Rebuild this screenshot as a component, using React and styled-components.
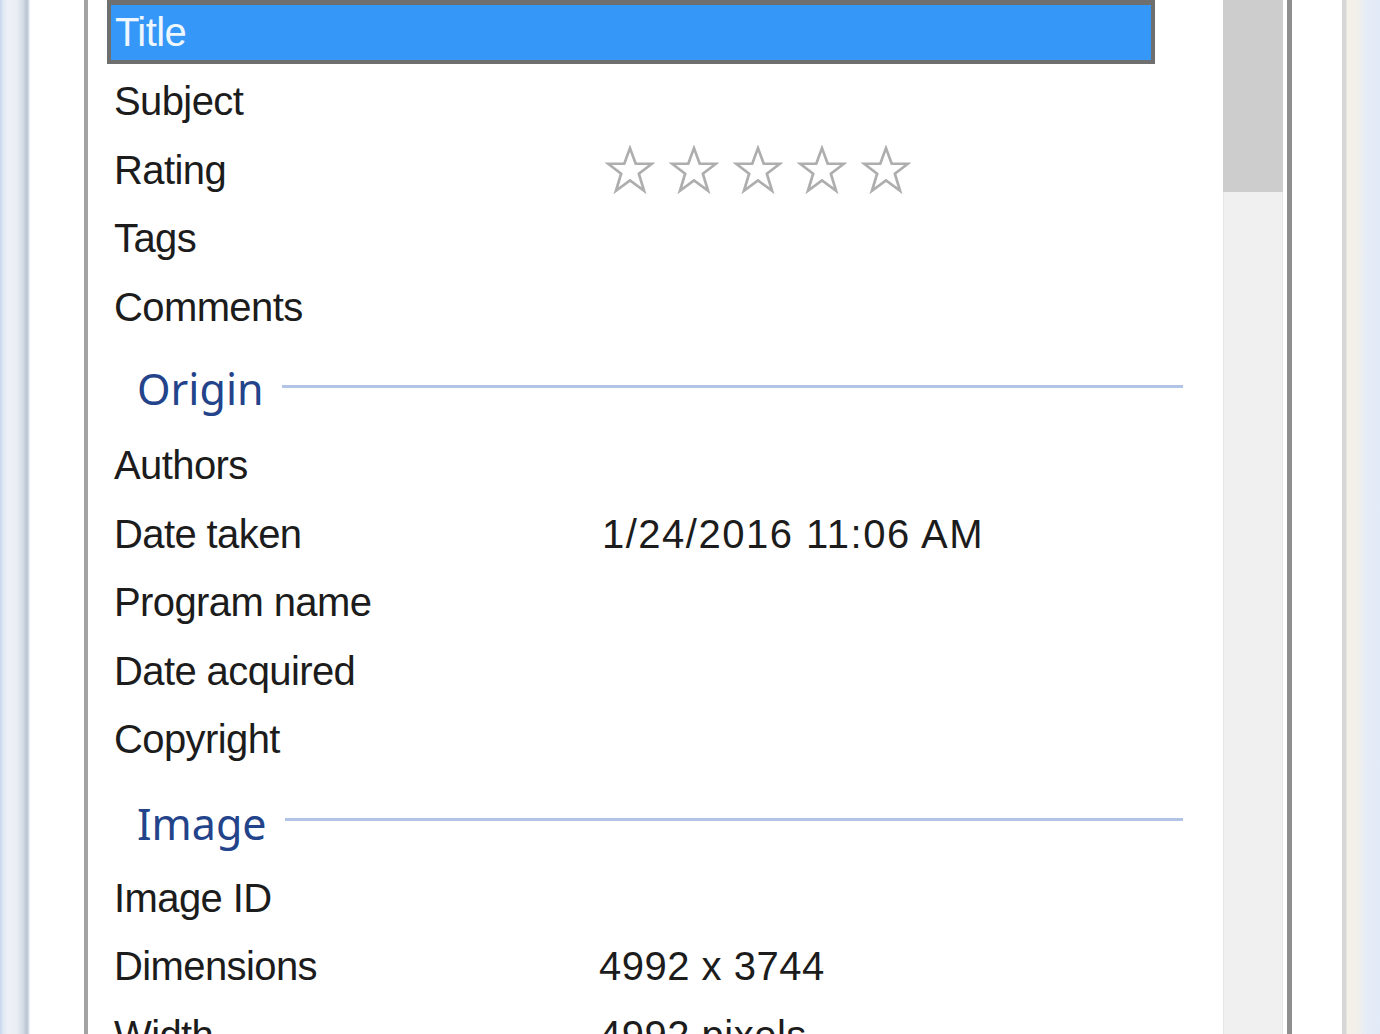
import React from "react";
import styled, { createGlobalStyle } from "styled-components";

const GlobalStyle = createGlobalStyle`
  html, body {
    margin: 0;
    padding: 0;
    background: #ffffff;
    overflow: hidden;
  }
  body {
    font-family: "Liberation Sans", Arial, sans-serif;
  }
`;

const Screen = styled.div`
  display: flex;
  width: 1380px;
  height: 1034px;
  overflow: hidden;
  background: #ffffff;
`;

const LeftFrame = styled.div`
  width: 30px;
  flex-shrink: 0;
  background: linear-gradient(
    to right,
    #c3d5ec 0px,
    #dfe8f3 3px,
    #eef2f7 8px,
    #e8edf3 17px,
    #d3dbe5 23px,
    #b8c3d1 27px,
    #f4f6f9 30px
  );
`;

const RightFrame = styled.div`
  width: 38px;
  flex-shrink: 0;
  background: linear-gradient(
    to right,
    #d6d6d6 0px,
    #d6d6d6 4px,
    #f4f1ea 5px,
    #f1efe9 16px,
    #e6edf7 24px,
    #e1eaf6 38px
  );
`;

const Gap = styled.div`
  width: ${(p) => p.w}px;
  flex-shrink: 0;
  background: #ffffff;
`;

const Panel = styled.div`
  width: 1208px;
  flex-shrink: 0;
  display: flex;
  box-sizing: border-box;
  border-left: 4px solid #a3a3a3;
  border-right: 5px solid #8f8f8f;
  background: #ffffff;
`;

const List = styled.div`
  flex: 1;
  padding-left: 19px;
  margin-top: -1px;
  display: flex;
  flex-direction: column;
`;

const Scrollbar = styled.div`
  width: 60px;
  margin-right: 4px;
  flex-shrink: 0;
  background: #f0f0f0;
  box-shadow: inset 1px 0 0 #e6e6e6, inset -1px 0 0 #e6e6e6;
`;

const Thumb = styled.div`
  height: 192px;
  background: #cdcdcd;
`;

const Row = styled.div`
  display: grid;
  grid-template-columns: 488px 1fr;
  align-items: center;
  flex-shrink: 0;
  width: 1048px;
  height: 68.5px;
  box-sizing: border-box;
  padding-left: 7px;
  font-size: 40px;
  color: #1c1c1c;
  white-space: nowrap;
`;

const SelectedRow = styled(Row)`
  height: 64.5px;
  margin-bottom: 4px;
  padding-left: 4px;
  color: #eef7ff;
  background: #3597f8;
  border: 4px solid #6f6f6f;
  border-top-width: 6px;
`;

const Label = styled.span`
  letter-spacing: -0.6px;
`;

const Value = styled.span`
  letter-spacing: ${(p) => p.spacing ?? 0.5}px;
  margin-left: ${(p) => p.shift ?? 0}px;
`;

const SectionHeader = styled.div`
  display: flex;
  align-items: center;
  flex-shrink: 0;
  gap: 18px;
  width: 1076px;
  height: 90px;
  padding-left: 30px;
  box-sizing: border-box;
`;

const SectionTitle = styled.span`
  font-family: "Noto Sans", "Open Sans", sans-serif;
  font-size: 43px;
  color: #23438a;
  transform: translateY(${(p) => p.shift || 0}px);
`;

const SectionLine = styled.div`
  flex: 1;
  height: 3px;
  background: #b2c4e6;
`;

const Stars = styled.div`
  display: flex;
  gap: 14px;
  margin-left: 3px;
`;

const Star = () => (
  <svg width="50" height="50" viewBox="0 0 48 48">
    <polygon
      points="24,3 29.5,18 45,18 32.5,27.5 37.5,44 24,34 10.5,44 15.5,27.5 3,18 18.5,18"
      fill="#ffffff"
      stroke="#aeaeae"
      strokeWidth="2.6"
      strokeLinejoin="miter"
    />
  </svg>
);

const description = [
  { label: "Title", selected: true },
  { label: "Subject" },
  { label: "Rating", stars: true },
  { label: "Tags" },
  { label: "Comments" },
];

const origin = [
  { label: "Authors" },
  { label: "Date taken", value: "1/24/2016 11:06 AM", spacing: 1.5 },
  { label: "Program name" },
  { label: "Date acquired" },
  { label: "Copyright" },
];

const image = [
  { label: "Image ID" },
  { label: "Dimensions", value: "4992 x 3744", spacing: 0.5, shift: -3 },
  { label: "Width", value: "4992 pixels", shift: -3 },
];

const PropRow = ({ item }) => {
  const RowKind = item.selected ? SelectedRow : Row;
  return (
    <RowKind>
      <Label>{item.label}</Label>
      {item.stars ? (
        <Stars>
          {[0, 1, 2, 3, 4].map((i) => (
            <Star key={i} />
          ))}
        </Stars>
      ) : (
        <Value spacing={item.spacing} shift={item.shift}>
          {item.value || ""}
        </Value>
      )}
    </RowKind>
  );
};

const Section = ({ title, shift }) => (
  <SectionHeader>
    <SectionTitle shift={shift}>{title}</SectionTitle>
    <SectionLine />
  </SectionHeader>
);

const App = () => {
  return (
    <>
      <GlobalStyle />
      <Screen>
        <LeftFrame />
        <Gap w={54} />
        <Panel>
          <List>
            {description.map((item) => (
              <PropRow key={item.label} item={item} />
            ))}
            <Section title="Origin" shift={2} />
            {origin.map((item) => (
              <PropRow key={item.label} item={item} />
            ))}
            <Section title="Image" shift={4} />
            {image.map((item) => (
              <PropRow key={item.label} item={item} />
            ))}
          </List>
          <Scrollbar>
            <Thumb />
          </Scrollbar>
        </Panel>
        <Gap w={50} />
        <RightFrame />
      </Screen>
    </>
  );
};

export default App;
